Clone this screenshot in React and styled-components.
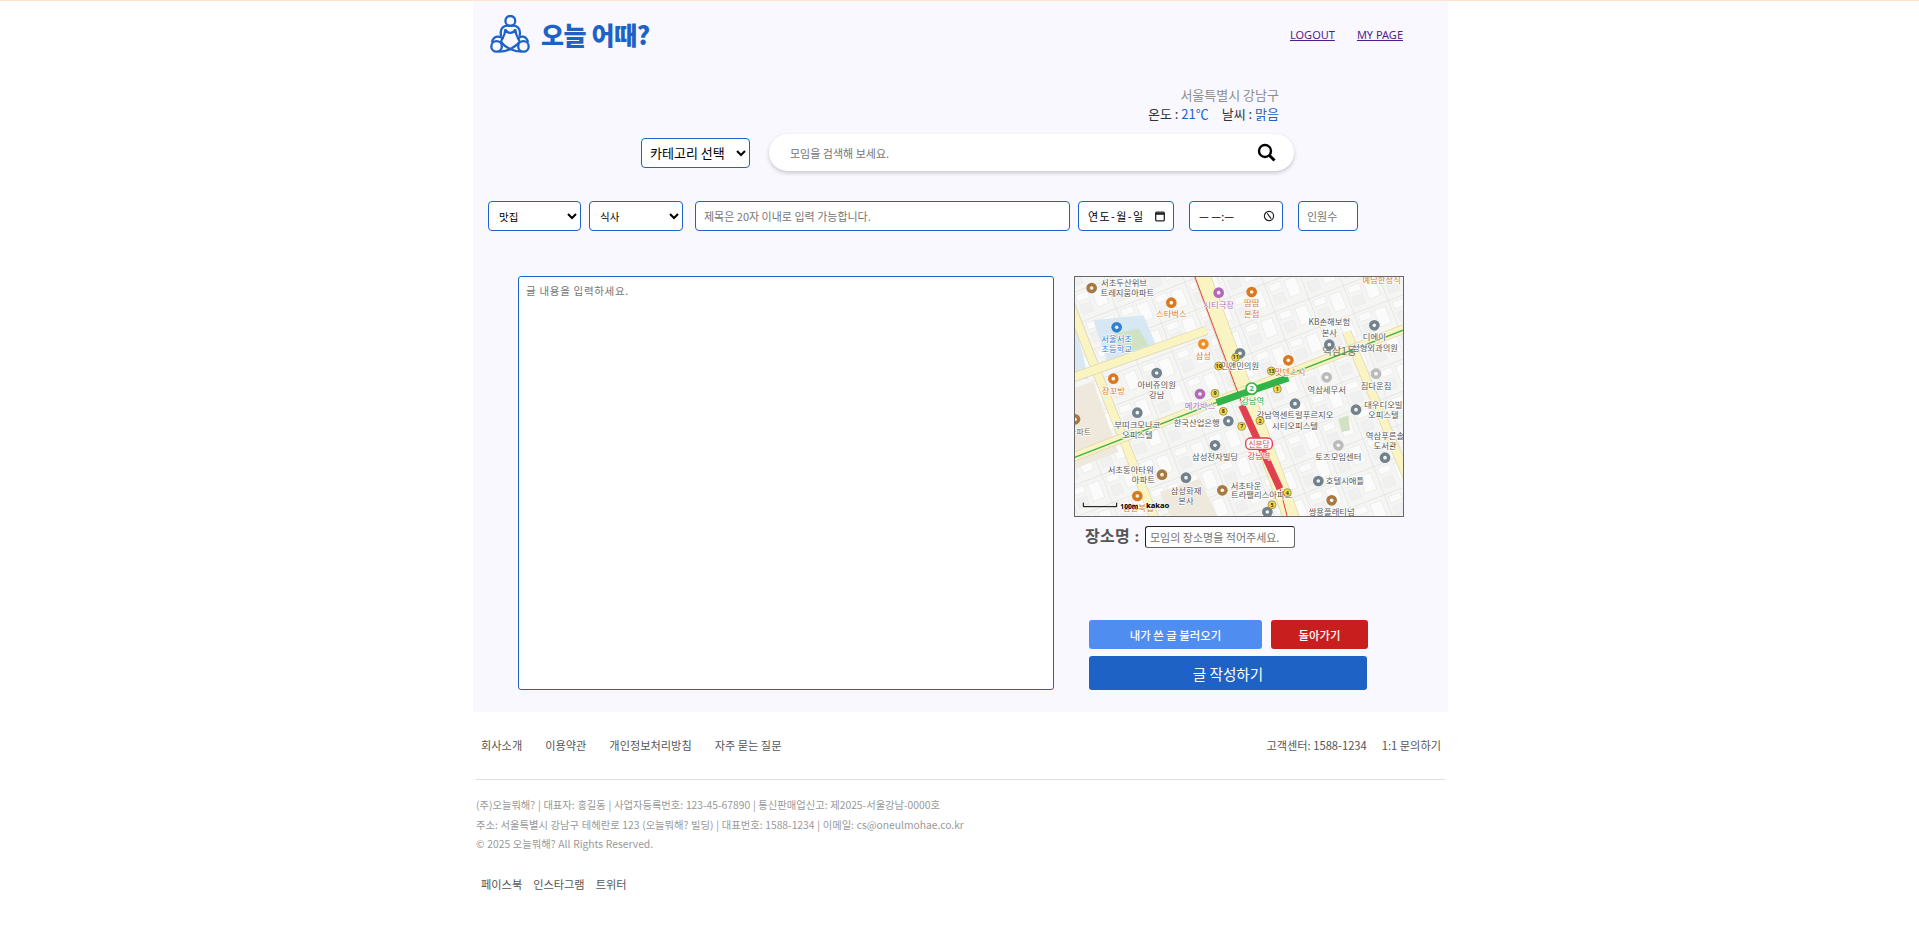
import React from "react";
import styled, { createGlobalStyle } from "styled-components";

const SANS = `"Noto Sans", "Noto Sans CJK KR", sans-serif`;
const KR = `"Noto Sans CJK KR", "Noto Sans", sans-serif`;
const BLUE = "#1e62c6";

const Global = createGlobalStyle`
  html, body { margin: 0; padding: 0; background: #fff; }
  body { border-top: 1px solid #fbe3cf; font-family: ${KR}; overflow: hidden; }
  * { box-sizing: border-box; }
`;

const Shell = styled.div`width: 975px; margin: 0 auto; transform: translateX(1px);`;
const Main = styled.main`background: #f9f8ff; height: 711px; display: flex; flex-direction: column;`;
const Header = styled.header`height: 68px; display: flex; align-items: center; justify-content: space-between; padding: 0 45px 0 17px;`;
const Brand = styled.div`display: flex; align-items: center; gap: 11px; margin-top: -2px;`;
const BrandName = styled.h1`margin: 0; font: 900 25px/1 ${KR}; color: ${BLUE}; letter-spacing: -0.4px;`;
const Nav = styled.nav`display: flex; gap: 22px; margin-top: -1px;`;
const NavLink = styled.a`font: 400 11px/15px ${SANS}; color: #551a8b; text-decoration: underline;`;
const Weather = styled.div`margin-top: 16px; padding-right: 169px; text-align: right; font: 400 13px/19px ${KR}; color: #333;`;
const Location = styled.div`color: #8d8d8d;`;
const Value = styled.span`color: ${BLUE};`;
const Sep = styled.span`display: inline-block; width: 13px;`;
const SearchRow = styled.div`display: flex; align-items: center; gap: 19px; margin-top: 11px; padding-left: 168px;`;
const Select = styled.select`
  height: ${p => p.$h}px; width: ${p => p.$w}px; margin-left: ${p => p.$ml || 0}px;
  border: 1px solid ${BLUE}; border-radius: 4px; background: #fff; color: #000;
  font: 400 ${p => p.$fs}px ${KR}; padding-left: ${p => p.$pl || 4}px;
`;
const SearchBox = styled.div`
  width: 525px; height: 37px; border-radius: 19px; background: #fff;
  box-shadow: 0 2px 4px rgba(0,0,0,.2); display: flex; align-items: center; padding: 0 18px 0 21px; justify-content: space-between;
`;
const SearchInput = styled.input`
  flex: 1; border: 0; outline: 0; background: transparent; font: 400 11px ${KR}; padding: 0;
  &::placeholder { color: #757575; opacity: 1; }
`;
const FormRow = styled.div`display: flex; align-items: center; margin-top: 30px; padding-left: 15px;`;
const Field = styled.input`
  height: 30px; width: ${p => p.$w}px; margin-left: ${p => p.$ml || 0}px; border: 1px solid ${BLUE}; border-radius: 4px;
  background: #fff; padding: 0 8px; font: 400 11px ${KR}; outline: 0;
  &::placeholder { color: #757575; opacity: 1; }
`;
const Picker = styled.div`
  height: 30px; width: ${p => p.$w}px; margin-left: ${p => p.$ml}px; border: 1px solid ${BLUE}; border-radius: 4px;
  background: #fff; padding: 0 7px 0 9px; display: flex; align-items: center; justify-content: space-between;
  font: 400 11px ${KR}; color: #000; white-space: pre; letter-spacing: ${p => p.$track}px;
`;
const Body = styled.div`display: grid; grid-template-columns: 536px 330px; column-gap: 20px; margin-top: 45px; padding-left: 45px;`;
const TextArea = styled.textarea`
  width: 536px; height: 414px; resize: none; border: 1px solid ${BLUE}; border-radius: 3px; background: #fff;
  padding: 6px 7px; font: 400 10.5px ${KR}; outline: 0; letter-spacing: .7px;
  &::placeholder { color: #757575; opacity: 1; }
`;
const Side = styled.div`display: flex; flex-direction: column;`;
const MapFrame = styled.div`width: 330px; height: 241px; border: 1px solid #666; overflow: hidden; background: #f6f6f3;`;
const PlaceRow = styled.div`display: flex; align-items: center; margin: 9px 0 0 11px; gap: 5px;`;
const PlaceLabel = styled.label`font: 700 16px/22px "Liberation Serif", "Noto Sans CJK KR", serif; color: #555; letter-spacing: .3px;`;
const PlaceInput = styled.input`
  width: 150px; height: 22px; border: 1px solid #666; border-top-color: #222; border-left-color: #222; border-radius: 3px; background: #fff;
  padding: 0 4px; font: 400 11px ${KR}; outline: 0;
  &::placeholder { color: #757575; opacity: 1; }
`;
const Actions = styled.div`display: grid; grid-template-columns: 173px 97px; column-gap: 9px; row-gap: 7px; margin: 72px 0 0 15px;`;
const Btn = styled.button`
  border: 0; border-radius: 3px; color: #fff; background: ${p => p.$bg}; height: ${p => p.$h}px;
  font: ${p => p.$weight || 500} ${p => p.$fs}px ${KR}; padding: 0; ${p => p.$wide && "grid-column: 1 / -1; width: 278px;"}
`;
const Footer = styled.footer`padding: 0 3px; color: #555; font-family: ${KR};`;
const FooterTop = styled.div`display: flex; justify-content: space-between; align-items: center; height: 68px; padding: 0 4px 0 5px; border-bottom: 1px solid #dfdfdf;`;
const LinkGroup = styled.div`display: flex; gap: ${p => p.$gap}px;`;
const FooterLink = styled.a`color: #555; font-size: 11.2px; margin-top: -1px;`;
const Legal = styled.div`margin-top: 15px; font-size: 10.3px; line-height: 19.5px; color: #999; word-spacing: .4px;`;
const Social = styled(LinkGroup)`margin-top: 23px; padding-left: 5px;`;

const Labels = [
  ["서초두산위브",192,62,"#555"],["트레지움아파트",202,91,"#555"],["시티극장",476,127,"#b06ab8"],["땀땀",575,123,"#d9791f"],["본점",575,155,"#d9791f"],
  ["스타벅스",334,156,"#d9791f"],["예담한정식",965,52,"#d9791f"],["KB손해보험",808,180,"#555"],["본사",808,212,"#555"],["디에이",943,224,"#555"],
  ["성형외과의원",945,256,"#555"],["서울서초",170,230,"#2f80d0"],["초등학교",170,260,"#2f80d0"],["삼성",430,281,"#d9791f"],["민앤민의원",540,310,"#555"],
  ["맛덴스시",690,328,"#d9791f"],["아비쥬의원",290,368,"#555"],["강남",290,398,"#555"],["장꼬방",160,385,"#d9791f"],["역삼세무서",800,383,"#555"],
  ["짐다운짐",948,372,"#555"],["메가박스",420,431,"#b06ab8"],["강남역",578,415,"#30a850"],["대우디오빌",970,427,"#555"],["오피스텔",970,457,"#555"],
  ["강남역센트럴푸르지오",705,457,"#555"],["시티오피스텔",705,491,"#555"],["부띠크모나코",232,488,"#555"],["오피스텔",232,518,"#555"],["아파트",60,508,"#8a6a3a"],
  ["한국산업은행",410,481,"#555"],["삼성전자빌딩",465,583,"#555"],["역삼푸른솔",975,520,"#555"],["도서관",975,550,"#555"],["토즈모임센터",835,584,"#555"],
  ["서초동아타워",212,622,"#555"],["아파트",250,652,"#555"],["호텔시애틀",855,657,"#555"],["삼성화재",378,685,"#555"],["본사",378,715,"#555"],
  ["서초타운",558,670,"#555"],["트라팰리스아파트",605,697,"#555"],["쌍용플래티넘",815,750,"#555"],["삼원복집",235,738,"#d9791f"],
];
const Pois = [
  [95,68,"#a5793f"],[476,82,"#b06ab8"],[575,80,"#d9791f"],[334,112,"#d9791f"],[943,180,"#71828c"],[808,238,"#71828c"],[170,186,"#2f80d0"],
  [430,236,"#f09020"],[540,264,"#71828c"],[685,285,"#d9791f"],[290,323,"#71828c"],[160,340,"#d9791f"],[800,336,"#bbb"],[948,325,"#bbb"],[420,386,"#b06ab8"],
  [888,433,"#71828c"],[705,415,"#71828c"],[232,442,"#71828c"],[45,462,"#a5793f"],[505,467,"#71828c"],[465,540,"#71828c"],[835,540,"#bbb"],[975,577,"#71828c"],
  [306,628,"#a5793f"],[775,647,"#71828c"],[378,637,"#71828c"],[487,675,"#a5793f"],[815,705,"#a5793f"],[232,692,"#d9791f"],[622,740,"#71828c"],
];
const Exits = [["11",527,276],["10",476,302],["13",634,317],["9",465,384],["1",652,371],["8",490,438],["2",600,466],["7",545,483],["4",682,682],["5",636,718]];
const Roads = [
  [0,40,300,800],[400,-40,710,800],[860,200,1060,680],[0,350,440,195],[0,590,1060,180],
];

const KakaoMap = () => (
  <svg width="328" height="239" viewBox="45 35 984 717" style={{ display: "block" }} aria-label="지도">
    <defs>
      <pattern id="blocks" width="110" height="90" patternUnits="userSpaceOnUse" patternTransform="rotate(-21)">
        <rect width="110" height="90" fill="#f5f5f3" />
        <rect x="10" y="10" width="38" height="22" fill="#fbfbfb" stroke="#e4e4e4" strokeWidth="1.5" />
        <rect x="60" y="14" width="36" height="54" fill="#fbfbfb" stroke="#e4e4e4" strokeWidth="1.5" />
        <rect x="12" y="44" width="34" height="30" fill="#f0f0f0" stroke="#e6e6e6" strokeWidth="1" />
        <path d="M0 0H110M0 0V90" stroke="#dadada" strokeWidth="3" />
      </pattern>
    </defs>
    <rect x="45" y="35" width="984" height="717" fill="url(#blocks)" />
    <path d="M45 370 L100 350 L175 560 L45 610Z" fill="#efe8dc" />
    <path d="M300 680 L420 640 L470 752 L330 752Z" fill="#efe8dc" />
    <path d="M45 170 L85 340 L45 345Z" fill="#d9e8f2" />
    <path d="M100 165 L250 150 L295 255 L145 300Z" fill="#d7e7f3" />
    <path d="M160 205 L235 190 L265 240 L190 265Z" fill="#cfe3c4" />
    <path d="M835 460 L865 450 L870 495 L845 500Z" fill="#cfe3c4" />
    {Roads.map(([a, b, c, d], i) => (
      <g key={i}>
        <line x1={a} y1={b} x2={c} y2={d} stroke="#dcd6ae" strokeWidth={i === 1 ? 50 : 28} />
        <line x1={a} y1={b} x2={c} y2={d} stroke="#faf3c2" strokeWidth={i === 1 ? 46 : 24} />
      </g>
    ))}
    <line x1="0" y1="593" x2="1060" y2="183" stroke="#3cb54a" strokeWidth="4" />
    <line x1="403" y1="30" x2="548" y2="420" stroke="#e0404f" strokeWidth="3" />
    <line x1="660" y1="670" x2="682" y2="755" stroke="#e0404f" strokeWidth="3" />
    <line x1="545" y1="420" x2="660" y2="670" stroke="#e0404f" strokeWidth="21" />
    <line x1="470" y1="412" x2="685" y2="338" stroke="#32b44a" strokeWidth="21" />
    {Pois.map(([x, y, c], i) => (
      <g key={i}>
        <circle cx={x} cy={y} r="16" fill={c} />
        <circle cx={x} cy={y} r="5.5" fill="#fff" opacity=".9" />
      </g>
    ))}
    <g fontFamily={KR} fontSize="25" textAnchor="middle">
      {Labels.map(([t, x, y, c], i) => (
        <text key={i} x={x} y={y} fill={c} stroke="#fff" strokeWidth="4" paintOrder="stroke" strokeLinejoin="round">{t}</text>
      ))}
      <text x="838" y="270" fontSize="31" fill="#777">역삼1동</text>
    </g>
    {Exits.map(([t, x, y]) => (
      <g key={t}>
        <circle cx={x} cy={y} r="12" fill="#f7d83c" stroke="#555" strokeWidth="1.5" />
        <text x={x} y={y + 6} fontSize="16" fontWeight="700" textAnchor="middle" fontFamily={SANS} fill="#333">{t}</text>
      </g>
    ))}
    <circle cx="575" cy="370" r="17" fill="#fff" stroke="#32b44a" strokeWidth="5" />
    <text x="575" y="378" fontSize="22" fontWeight="700" textAnchor="middle" fontFamily={SANS} fill="#32b44a">2</text>
    <rect x="557" y="518" width="80" height="34" rx="14" fill="#fff" stroke="#e0404f" strokeWidth="4" />
    <text x="597" y="544" fontSize="23" textAnchor="middle" fontFamily={KR} fill="#e0404f">신분당</text>
    <text x="597" y="580" fontSize="25" textAnchor="middle" fontFamily={KR} fill="#e0404f" stroke="#fff" strokeWidth="4" paintOrder="stroke">강남역</text>
    <path d="M70 712V724H170V712" fill="none" stroke="#000" strokeWidth="3" />
    <text x="208" y="730" fontSize="20" fontWeight="700" textAnchor="middle" fontFamily={SANS} fill="#000">100m</text>
    <text x="293" y="729" fontSize="23" fontWeight="700" textAnchor="middle" fontFamily={SANS} fill="#000">kakao</text>
  </svg>
);

const LogoMark = () => (
  <svg width="40" height="39" viewBox="0 26 122 119" fill="none" stroke={BLUE} strokeWidth="7" aria-hidden="true">
    <circle cx="62" cy="44" r="15" />
    <circle cx="20" cy="122" r="16" />
    <circle cx="102" cy="122" r="16" />
    <path d="M34 90C28 64 44 56 62 59C80 56 96 64 90 90" />
    <path d="M46 70C54 84 70 84 78 70C76 90 90 98 90 108C84 118 72 124 62 130C50 124 40 118 34 108C34 98 48 90 46 70Z" />
    <path d="M6 110C10 88 32 88 40 100M84 100C92 88 112 88 116 110M26 138C42 138 54 134 62 130C70 134 82 138 96 138" />
  </svg>
);

const SearchIcon = () => (
  <svg width="19" height="19" viewBox="0 0 19 19" fill="none" stroke="#000" aria-hidden="true">
    <circle cx="8" cy="8" r="6" strokeWidth="2.4" />
    <path d="M12.5 12.5L17.5 17.5" strokeWidth="3" />
  </svg>
);
const CalendarIcon = () => (
  <svg width="12" height="12" viewBox="0 0 12 12" fill="none" stroke="#222" strokeWidth="1.3" aria-hidden="true">
    <rect x="1.7" y="2.2" width="8.6" height="8.6" rx="1" />
    <path d="M1.7 3.8H10.3" strokeWidth="2" />
  </svg>
);
const ClockIcon = () => (
  <svg width="12" height="12" viewBox="0 0 12 12" fill="none" stroke="#222" strokeWidth="1.2" aria-hidden="true">
    <circle cx="6" cy="6" r="4.6" />
    <path d="M4.2 3.2L6 6L8.2 8.6" />
  </svg>
);

export default function App() {
  return (
    <>
      <Global />
      <Shell>
        <Main>
          <Header>
            <Brand>
              <LogoMark />
              <BrandName>오늘 어때?</BrandName>
            </Brand>
            <Nav>
              <NavLink href="#">LOGOUT</NavLink>
              <NavLink href="#">MY PAGE</NavLink>
            </Nav>
          </Header>
          <Weather>
            <Location>서울특별시 강남구</Location>
            <div>온도 : <Value>21℃</Value><Sep />날씨 : <Value>맑음</Value></div>
          </Weather>
          <SearchRow>
            <Select $w={109} $h={30} $fs={13}><option>카테고리 선택</option></Select>
            <SearchBox>
              <SearchInput placeholder="모임을 검색해 보세요." />
              <SearchIcon />
            </SearchBox>
          </SearchRow>
          <FormRow>
            <Select $w={93} $h={30} $fs={10.5} $pl={6}><option>맛집</option></Select>
            <Select $w={94} $h={30} $fs={10.5} $ml={8} $pl={6}><option>식사</option></Select>
            <Field $w={375} $ml={12} placeholder="제목은 20자 이내로 입력 가능합니다." />
            <Picker $w={96} $ml={8} $track={1.4}>연도-월-일<CalendarIcon /></Picker>
            <Picker $w={94} $ml={15} $track={0}>— —:—<ClockIcon /></Picker>
            <Field $w={60} $ml={15} placeholder="인원수" />
          </FormRow>
          <Body>
            <TextArea placeholder="글 내용을 입력하세요." />
            <Side>
              <MapFrame><KakaoMap /></MapFrame>
              <PlaceRow>
                <PlaceLabel>장소명 :</PlaceLabel>
                <PlaceInput placeholder="모임의 장소명을 적어주세요." />
              </PlaceRow>
              <Actions>
                <Btn $bg="#4f8df0" $h={29} $fs={11.4}>내가 쓴 글 불러오기</Btn>
                <Btn $bg="#c81e1e" $h={29} $fs={11.4}>돌아가기</Btn>
                <Btn $bg={BLUE} $h={34} $fs={14.6} $weight={400} $wide>글 작성하기</Btn>
              </Actions>
            </Side>
          </Body>
        </Main>
        <Footer>
          <FooterTop>
            <LinkGroup $gap={23}>
              <FooterLink>회사소개</FooterLink>
              <FooterLink>이용약관</FooterLink>
              <FooterLink>개인정보처리방침</FooterLink>
              <FooterLink>자주 묻는 질문</FooterLink>
            </LinkGroup>
            <LinkGroup $gap={15}>
              <FooterLink>고객센터: 1588-1234</FooterLink>
              <FooterLink>1:1 문의하기</FooterLink>
            </LinkGroup>
          </FooterTop>
          <Legal>
            <div>(주)오늘뭐해? | 대표자: 홍길동 | 사업자등록번호: 123-45-67890 | 통신판매업신고: 제2025-서울강남-0000호</div>
            <div>주소: 서울특별시 강남구 테헤란로 123 (오늘뭐해? 빌딩) | 대표번호: 1588-1234 | 이메일: cs@oneulmohae.co.kr</div>
            <div>© 2025 오늘뭐해? All Rights Reserved.</div>
          </Legal>
          <Social $gap={11}>
            <FooterLink>페이스북</FooterLink>
            <FooterLink>인스타그램</FooterLink>
            <FooterLink>트위터</FooterLink>
          </Social>
        </Footer>
      </Shell>
    </>
  );
}
